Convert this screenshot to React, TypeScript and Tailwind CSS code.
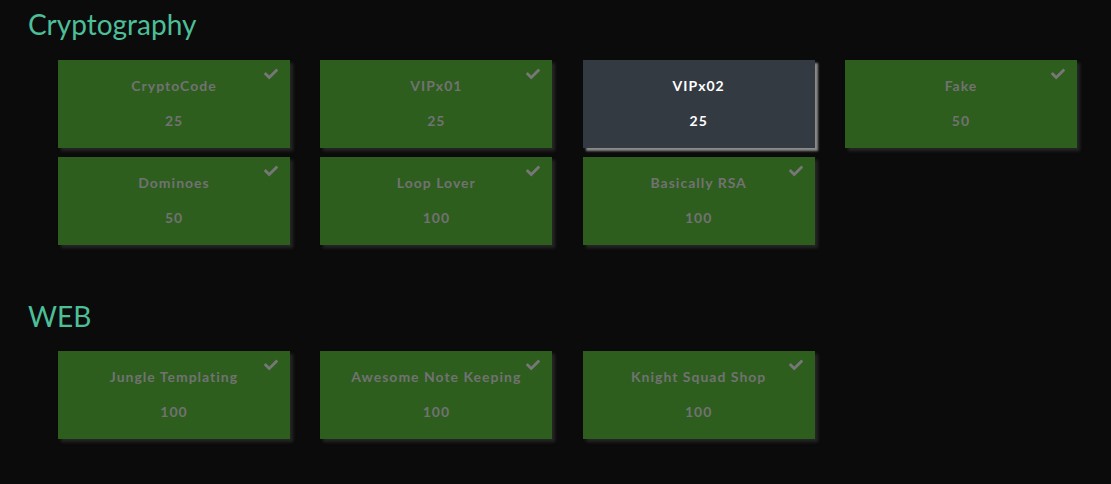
import { FaCheck } from "react-icons/fa";

type Challenge = { name: string; points: number; solved: boolean };

const categories: { title: string; items: Challenge[] }[] = [
  {
    title: "Cryptography",
    items: [
      { name: "CryptoCode", points: 25, solved: true },
      { name: "VIPx01", points: 25, solved: true },
      { name: "VIPx02", points: 25, solved: false },
      { name: "Fake", points: 50, solved: true },
      { name: "Dominoes", points: 50, solved: true },
      { name: "Loop Lover", points: 100, solved: true },
      { name: "Basically RSA", points: 100, solved: true },
    ],
  },
  {
    title: "WEB",
    items: [
      { name: "Jungle Templating", points: 100, solved: true },
      { name: "Awesome Note Keeping", points: 100, solved: true },
      { name: "Knight Squad Shop", points: 100, solved: true },
    ],
  },
];

const Card = ({ c }: { c: Challenge }) => (
  <div
    className={
      c.solved
        ? "relative h-[88px] flex flex-col items-center pt-[16px] gap-[15px] bg-[#2d5e1e] text-[#727272] shadow-[3px_3px_3px_#262626]"
        : "relative h-[88px] flex flex-col items-center pt-[16px] gap-[15px] bg-[#343a42] text-white shadow-[3px_3px_2px_#8a8a8a]"
    }
  >
    {c.solved && (
      <FaCheck className="absolute top-[7px] right-[12px] text-[#777] text-[14px]" />
    )}
    <div className="text-[14px] leading-[20px] font-bold tracking-[1px]">{c.name}</div>
    <div className="text-[14px] leading-[20px] font-bold tracking-[1px]">{c.points}</div>
  </div>
);

export default function App() {
  return (
    <div
      className="min-h-[484px] w-full bg-[#0b0b0c] pt-[8px]"
      style={{ fontFamily: "Lato, 'Open Sans', sans-serif" }}
    >
      {categories.map((cat, i) => (
        <section key={cat.title} className={i > 0 ? "mt-[55px]" : ""}>
          <h2 className="pl-[28px] text-[28px] leading-[1.2] text-[#4dbf98] mb-[18px]">
            {cat.title}
          </h2>
          <div className="ml-[58px] w-[1019px] grid grid-cols-4 gap-x-[30.33px] gap-y-[9px]">
            {cat.items.map((c) => (
              <Card key={c.name} c={c} />
            ))}
          </div>
        </section>
      ))}
    </div>
  );
}
